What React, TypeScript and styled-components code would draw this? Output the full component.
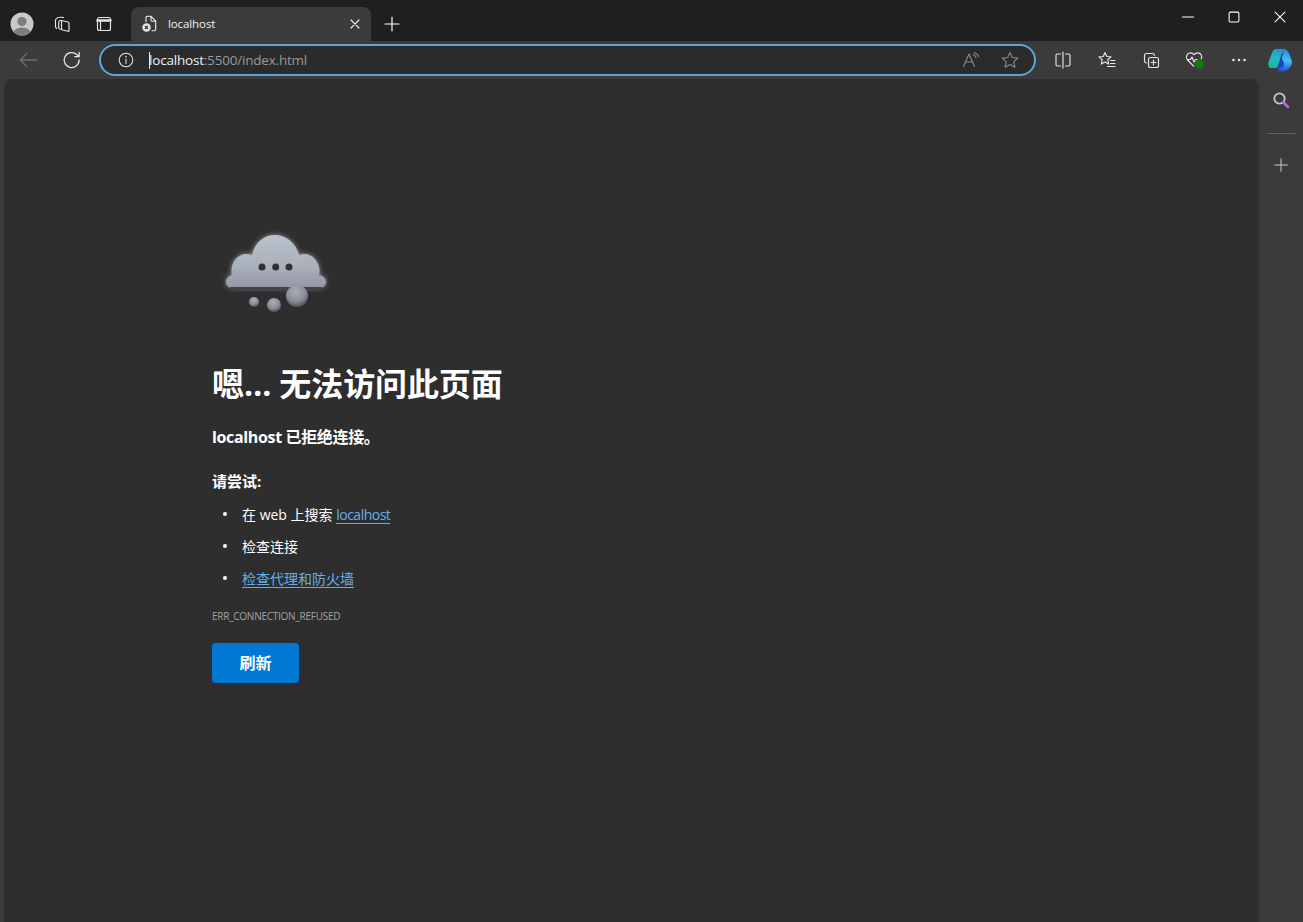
import React from "react";
import styled, { createGlobalStyle } from "styled-components";

const FONT = `"Open Sans", "Noto Sans", "Noto Sans CJK SC", sans-serif`;

const GlobalStyle = createGlobalStyle`
    html, body {
        margin: 0;
        padding: 0;
        height: 100%;
        background: #3b3b3b;
        overflow: hidden;
    }
    #root {
        height: 100%;
    }
`;

const Window = styled.div`
    width: 1303px;
    height: 922px;
    display: flex;
    flex-direction: column;
    font-family: ${FONT};
    color: #fff;
    overflow: hidden;
`;

const TitleBar = styled.div`
    height: 41px;
    flex: none;
    background: #1f1f1f;
    display: flex;
    align-items: flex-end;
`;

const TitleIcon = styled.div<{ $width: number }>`
    width: ${({ $width }) => $width}px;
    height: 34px;
    display: flex;
    align-items: center;
    justify-content: center;
    flex: none;
`;

const TitleLeft = styled.div`
    display: flex;
    align-items: center;
    padding-left: 4px;
    width: 127px;
    box-sizing: border-box;
    flex: none;
`;

const Tab = styled.div`
    width: 240px;
    height: 34px;
    flex: none;
    margin-left: 4px;
    background: #3b3b3b;
    border-radius: 8px 8px 0 0;
    display: flex;
    align-items: center;
    padding: 0 8px 1px 11px;
    box-sizing: border-box;
    font-size: 11.5px;
    color: #f2f2f2;
`;

const TabTitle = styled.span`
    flex: 1;
    margin-left: 10px;
    margin-bottom: 1px;
    letter-spacing: -0.1px;
`;

const NewTab = styled.div`
    width: 42px;
    height: 34px;
    flex: none;
    display: flex;
    align-items: center;
    justify-content: center;
`;

const WindowControls = styled.div`
    margin-left: auto;
    height: 33px;
    align-self: flex-start;
    display: flex;
`;

const ControlButton = styled.div`
    width: 46px;
    height: 33px;
    display: flex;
    align-items: center;
    justify-content: center;
`;

const Toolbar = styled.div`
    height: 38px;
    flex: none;
    background: #3b3b3b;
    display: flex;
    align-items: center;
`;

const ToolButton = styled.div<{ $width?: number }>`
    width: ${({ $width }) => $width ?? 44}px;
    height: 30px;
    flex: none;
    display: flex;
    align-items: center;
    justify-content: center;
`;

const NavButtons = styled.div`
    display: flex;
    width: 99px;
    flex: none;
    padding-left: 6px;
    box-sizing: border-box;
`;

const AddressBar = styled.div`
    width: 937px;
    height: 32px;
    flex: none;
    box-sizing: border-box;
    border: 2px solid #62a4d4;
    border-radius: 16px;
    background: #2b2b2b;
    display: flex;
    align-items: center;
    padding: 0 4px 0 16px;
`;

const UrlText = styled.div`
    flex: 1;
    margin-left: 14px;
    font-size: 13.5px;
    letter-spacing: -0.2px;
    color: #9a9a9a;
    position: relative;
    white-space: nowrap;
`;

const UrlHost = styled.span`
    color: #f0f0f0;
`;

const Caret = styled.span`
    position: absolute;
    left: 0;
    top: 1px;
    width: 1px;
    height: 17px;
    background: #e8e8e8;
`;

const ToolGroup = styled.div`
    display: flex;
    margin-left: 5px;
`;

const Body = styled.div`
    flex: 1;
    display: flex;
    min-height: 0;
`;

const Page = styled.main`
    margin-left: 4px;
    width: 1255px;
    flex: none;
    background: #2e2e2e;
    border-radius: 8px 8px 0 0;
    box-sizing: border-box;
    padding: 146px 0 0 208px;
`;

const SideBar = styled.aside`
    flex: 1;
    display: flex;
    flex-direction: column;
    align-items: center;
    padding: 7px 0 0 0;
`;

const SideButton = styled.div`
    height: 28px;
    display: flex;
    align-items: center;
    justify-content: center;
`;

const SideDivider = styled.div`
    width: 28px;
    height: 1px;
    background: #5f5f5f;
    margin: 19px 0 17px;
`;

const Illustration = styled.div`
    width: 128px;
    height: 110px;
`;

const Heading = styled.h1`
    margin: 28px 0 0;
    font-size: 32px;
    line-height: 42px;
    font-weight: 700;
    letter-spacing: -0.1px;
    color: #fff;
`;

const SubHeading = styled.p`
    margin: 20px 0 0;
    font-size: 16px;
    line-height: 24px;
    font-weight: 700;
    letter-spacing: -0.35px;
`;

const TryLabel = styled.p`
    margin: 22px 0 0;
    font-size: 15px;
    line-height: 20px;
    font-weight: 700;
`;

const Suggestions = styled.ul`
    list-style: none;
    margin: 7px 0 0;
    padding: 0;
`;

const Suggestion = styled.li`
    height: 32px;
    display: flex;
    align-items: center;
    font-size: 14px;
    padding-left: 30px;
    position: relative;
    color: #fff;
    white-space: pre;
    &::before {
        content: "";
        position: absolute;
        left: 11px;
        top: 14px;
        width: 4px;
        height: 4px;
        background: #fff;
        border-radius: 50%;
    }
`;

const Link = styled.a<{ $tight?: boolean }>`
    color: #62aee8;
    text-decoration: none;
    border-bottom: 1px solid #62aee8;
    padding-top: 1px;
    line-height: 17px;
    letter-spacing: ${({ $tight }) => ($tight ? "-0.5px" : "0")};
`;

const ErrorCode = styled.div`
    margin-top: 15px;
    font-size: 10px;
    line-height: 14px;
    letter-spacing: -0.25px;
    color: #a3a3a3;
`;

const ReloadButton = styled.button`
    display: block;
    margin-top: 20px;
    width: 87px;
    height: 40px;
    border: none;
    border-radius: 4px;
    padding: 0 0 2px;
    background: #0078d4;
    color: #fff;
    font-family: ${FONT};
    font-size: 16px;
    font-weight: 700;
`;

const Stroke = styled.svg<{ $color?: string }>`
    display: block;
    fill: none;
    stroke: ${({ $color }) => $color ?? "#e6e6e6"};
    stroke-width: 1.15;
    stroke-linecap: round;
    stroke-linejoin: round;
`;

const Icon = ({
    size = 20,
    color,
    children,
}: {
    size?: number;
    color?: string;
    children: React.ReactNode;
}) => (
    <Stroke width={size} height={size} viewBox="0 0 20 20" $color={color}>
        {children}
    </Stroke>
);

const Avatar = () => (
    <svg width="24" height="24" viewBox="0 0 24 24">
        <defs>
            <clipPath id="avatar-clip">
                <circle cx="12" cy="12" r="11.5" />
            </clipPath>
        </defs>
        <g clipPath="url(#avatar-clip)">
            <rect width="24" height="24" fill="#c9c9c9" />
            <circle cx="12" cy="9.6" r="4.6" fill="#7d7d7d" />
            <ellipse cx="12" cy="21" rx="8.6" ry="5.6" fill="#7d7d7d" />
        </g>
    </svg>
);

const Copilot = () => (
    <svg width="24" height="24" viewBox="0 0 24 24">
        <defs>
            <linearGradient id="cp-a" x1="0.7" y1="0" x2="0.2" y2="1">
                <stop offset="0" stopColor="#1f8fe0" />
                <stop offset="0.45" stopColor="#1fb8c8" />
                <stop offset="1" stopColor="#22b59a" />
            </linearGradient>
            <linearGradient id="cp-b" x1="0.6" y1="0" x2="0.4" y2="1">
                <stop offset="0" stopColor="#2a8fe8" />
                <stop offset="0.45" stopColor="#3fc0f2" />
                <stop offset="0.75" stopColor="#2a7be0" />
                <stop offset="1" stopColor="#1c3fc0" />
            </linearGradient>
        </defs>
        <path
            d="M16 3C18 2 20 3 21 5L23.700 12.500C24.500 16 22.500 19 20 21.500C18 23 16 24 14 24L7 24C9 23 10 22 10.500 20Z"
            fill="url(#cp-b)"
        />
        <path
            d="M8 1L16 1C18 1 19 2 19 3L16 4C14 5 13.500 6 13 8L10 18C9.500 19.500 8.500 20 7 20L3 20C1 20 -0.500 17 0.500 14L4 5C5 2.500 6 1 8 1Z"
            fill="url(#cp-a)"
        />
        <path d="M13 8.500L16 15L15 19.500L10 19.500C10 19 10 18.500 10.200 18Z" fill="#1a49b8" />
    </svg>
);

const CLOUD_PATH =
    "M21 63C16.500 63 14 60 14 57C14 53.500 16.500 51 20 50C17 38 27 25 40 30C43 17 52 10 63 10C74 10 84 18 87 30C99 25 110 38 107 50C111 51 114 53.500 114 57C114 60 111.500 63 107 63Z";

const Cloud = () => (
    <svg width="128" height="110" viewBox="0 0 128 110">
        <defs>
            <linearGradient id="cloud-fill" x1="0" y1="0" x2="0" y2="1">
                <stop offset="0" stopColor="#bcc2cc" />
                <stop offset="0.6" stopColor="#aab0bb" />
                <stop offset="1" stopColor="#9297a2" />
            </linearGradient>
            <radialGradient id="ball" cx="0.45" cy="0.3" r="0.8">
                <stop offset="0" stopColor="#a9aeb9" />
                <stop offset="0.55" stopColor="#888d98" />
                <stop offset="1" stopColor="#3a3d43" />
            </radialGradient>
            <filter id="glow" x="-20%" y="-20%" width="140%" height="140%">
                <feGaussianBlur stdDeviation="2.500" />
            </filter>
            <filter id="soft" x="-10%" y="-10%" width="120%" height="120%">
                <feGaussianBlur stdDeviation="0.6" />
            </filter>
        </defs>
        <path d={CLOUD_PATH} fill="#fff" opacity="0.5" filter="url(#glow)" />
        <path d={CLOUD_PATH} fill="url(#cloud-fill)" filter="url(#soft)" />
        <rect x="18" y="62" width="92" height="2.500" rx="1.200" fill="#3c424c" filter="url(#soft)" />
        <circle cx="50" cy="42" r="3.500" fill="#2e3034" />
        <circle cx="63.700" cy="42" r="3.500" fill="#2e3034" />
        <circle cx="77" cy="42" r="3.500" fill="#2e3034" />
        <circle cx="42" cy="77" r="5" fill="url(#ball)" />
        <circle cx="62" cy="80" r="7" fill="url(#ball)" />
        <circle cx="85" cy="71" r="11" fill="url(#ball)" />
    </svg>
);

const App = () => (
    <Window>
        <GlobalStyle />
        <TitleBar>
            <TitleLeft>
                <TitleIcon $width={36}>
                    <Avatar />
                </TitleIcon>
                <TitleIcon $width={43}>
                    <Icon>
                        <path d="M9.500 6.500L16 8c.6.2 1 .6 1 1.200V16.500c0 .6-.5.9-1 .8L10.500 16c-.6-.2-1-.7-1-1.300z" />
                        <path d="M9.500 6.500H8.500c-1 0-1.800.7-1.800 1.700V13.500c0 .7.4 1.300 1 1.500l1.800.5" />
                        <path d="M11.500 3.500C8 3 5 3.500 4 5c-.6.9-.5 1.500-.5 2.500v5c0 1 .5 1.600 1.300 1.900" />
                    </Icon>
                </TitleIcon>
                <TitleIcon $width={41}>
                    <Icon>
                        <rect x="3.500" y="3.500" width="13" height="13" rx="2" />
                        <path d="M3.500 6.500h13" strokeWidth="2.400" />
                        <path d="M6.500 6.500v10" />
                    </Icon>
                </TitleIcon>
            </TitleLeft>
            <Tab>
                <svg width="16" height="17" viewBox="0 0 16 17" fill="none">
                    <path
                        d="M4 7V2.500c0-.8.5-1.300 1.300-1.300H9L13.700 6v8.300c0 .8-.5 1.400-1.300 1.400H9.500M9 1.500V5c0 .7.400 1.200 1.200 1.200h3.300"
                        stroke="#eee"
                        strokeWidth="1.100"
                    />
                    <circle cx="4.500" cy="12.500" r="4.200" fill="#e8e8e8" />
                    <path d="M3 11l3 3M6 11l-3 3" stroke="#333" strokeWidth="1.100" />
                </svg>
                <TabTitle>localhost</TabTitle>
                <Icon size={16}>
                    <path d="M5 5l10 10M15 5L5 15" strokeWidth="1.500" />
                </Icon>
            </Tab>
            <NewTab>
                <Icon size={20} color="#fff">
                    <path d="M10 3v14M3 10h14" />
                </Icon>
            </NewTab>
            <WindowControls>
                <ControlButton>
                    <Icon size={14} color="#fff">
                        <path d="M2 10h16" strokeWidth="1.500" />
                    </Icon>
                </ControlButton>
                <ControlButton>
                    <Icon size={14} color="#fff">
                        <rect x="3" y="3" width="14" height="14" rx="2" strokeWidth="1.500" />
                    </Icon>
                </ControlButton>
                <ControlButton>
                    <Icon size={14} color="#fff">
                        <path d="M3 3l14 14M17 3L3 17" strokeWidth="1.500" />
                    </Icon>
                </ControlButton>
            </WindowControls>
        </TitleBar>
        <Toolbar>
            <NavButtons>
                <ToolButton>
                    <Icon size={22} color="#707070">
                        <path d="M3 10h15M3 10l6-6M3 10l6 6" />
                    </Icon>
                </ToolButton>
                <ToolButton>
                    <Icon size={22}>
                        <path d="M16.500 10a6.800 6.800 0 1 1-2.200-5L16.500 7V3M16.500 7h-4" />
                    </Icon>
                </ToolButton>
            </NavButtons>
            <AddressBar>
                <Icon size={18}>
                    <circle cx="10" cy="10" r="7.500" />
                    <path d="M10 9v5" />
                    <path d="M10 6.200v.3" strokeWidth="1.600" />
                </Icon>
                <UrlText>
                    <Caret />
                    <UrlHost>localhost</UrlHost>:5500/index.html
                </UrlText>
                <ToolButton $width={38}>
                    <Icon size={20} color="#8a8a8a">
                        <path d="M2.500 16.500L8 4l5.500 12.500M4.500 12h7" />
                        <path d="M12 4.500c1.500.6 2.400 1.500 3 3M13.500 2.500c2 .8 3.200 2.200 4 4" />
                    </Icon>
                </ToolButton>
                <ToolButton $width={40}>
                    <Icon size={20} color="#8a8a8a">
                        <path d="M10 2.500l2.300 5 5.400.6-4 3.700 1.100 5.400L10 14.500l-4.800 2.700 1.100-5.400-4-3.700 5.400-.6z" />
                    </Icon>
                </ToolButton>
            </AddressBar>
            <ToolGroup>
                <ToolButton>
                    <Icon>
                        <path d="M10 2v16M7.500 4H4.500c-1 0-1.500.6-1.500 1.500v9c0 1 .6 1.500 1.500 1.500h3M12.500 4h3c1 0 1.500.6 1.500 1.500v9c0 1-.6 1.500-1.500 1.500h-3" />
                    </Icon>
                </ToolButton>
                <ToolButton>
                    <Icon>
                        <path d="M8 2.500l1.800 4 4.200.4-3.200 2.900.9 4.300-3.700-2.200-3.700 2.200.9-4.300L2 6.900l4.200-.4z" />
                        <path d="M13.500 10.500H18M13.500 13.500H18M10.500 16.500H18" />
                    </Icon>
                </ToolButton>
                <ToolButton>
                    <Icon>
                        <rect x="7.500" y="7.500" width="10" height="10" rx="2" />
                        <path d="M12.500 10v5M10 12.500h5" />
                        <path d="M13.500 5.500c-.2-1.200-1-2-2-2H5.500c-1.200 0-2 .8-2 2v5.500c0 1.100.8 1.900 1.800 2" />
                    </Icon>
                </ToolButton>
                <ToolButton>
                    <svg width="22" height="22" viewBox="0 0 22 22" fill="none">
                        <path
                            d="M10 17.500L3.500 11C1 8 3 3.800 6.500 3.800c1.500 0 2.700.7 3.500 2 .8-1.300 2-2 3.500-2 3.500 0 5.300 3.500 3.500 6.500M2.800 10.500h3.700l1.500-2.500 2 5 1.500-2.500h2"
                            stroke="#e6e6e6"
                            strokeWidth="1.150"
                            strokeLinejoin="round"
                        />
                        <circle cx="15.500" cy="15" r="4.500" fill="#107c10" />
                    </svg>
                </ToolButton>
                <ToolButton>
                    <Icon>
                        <circle cx="4.500" cy="10" r="0.700" fill="#e6e6e6" />
                        <circle cx="10" cy="10" r="0.700" fill="#e6e6e6" />
                        <circle cx="15.500" cy="10" r="0.700" fill="#e6e6e6" />
                    </Icon>
                </ToolButton>
                <ToolButton $width={38}>
                    <Copilot />
                </ToolButton>
            </ToolGroup>
        </Toolbar>
        <Body>
            <Page>
                <Illustration>
                    <Cloud />
                </Illustration>
                <Heading>嗯… 无法访问此页面</Heading>
                <SubHeading>localhost 已拒绝连接。</SubHeading>
                <TryLabel>请尝试:</TryLabel>
                <Suggestions>
                    <Suggestion>
                        在 web 上搜索 <Link href="#" $tight>localhost</Link>
                    </Suggestion>
                    <Suggestion>检查连接</Suggestion>
                    <Suggestion>
                        <Link href="#">检查代理和防火墙</Link>
                    </Suggestion>
                </Suggestions>
                <ErrorCode>ERR_CONNECTION_REFUSED</ErrorCode>
                <ReloadButton>刷新</ReloadButton>
            </Page>
            <SideBar>
                <SideButton>
                    <svg width="20" height="20" viewBox="0 0 20 20" fill="none">
                        <circle cx="8.500" cy="8.500" r="5.200" stroke="#c8c8c8" strokeWidth="1.800" />
                        <path d="M12.500 12.500l4.500 4.500" stroke="#b06fd8" strokeWidth="2.600" strokeLinecap="round" />
                    </svg>
                </SideButton>
                <SideDivider />
                <SideButton>
                    <Icon size={18} color="#c8c8c8">
                        <path d="M10 3v14M3 10h14" />
                    </Icon>
                </SideButton>
            </SideBar>
        </Body>
    </Window>
);

export default App;
